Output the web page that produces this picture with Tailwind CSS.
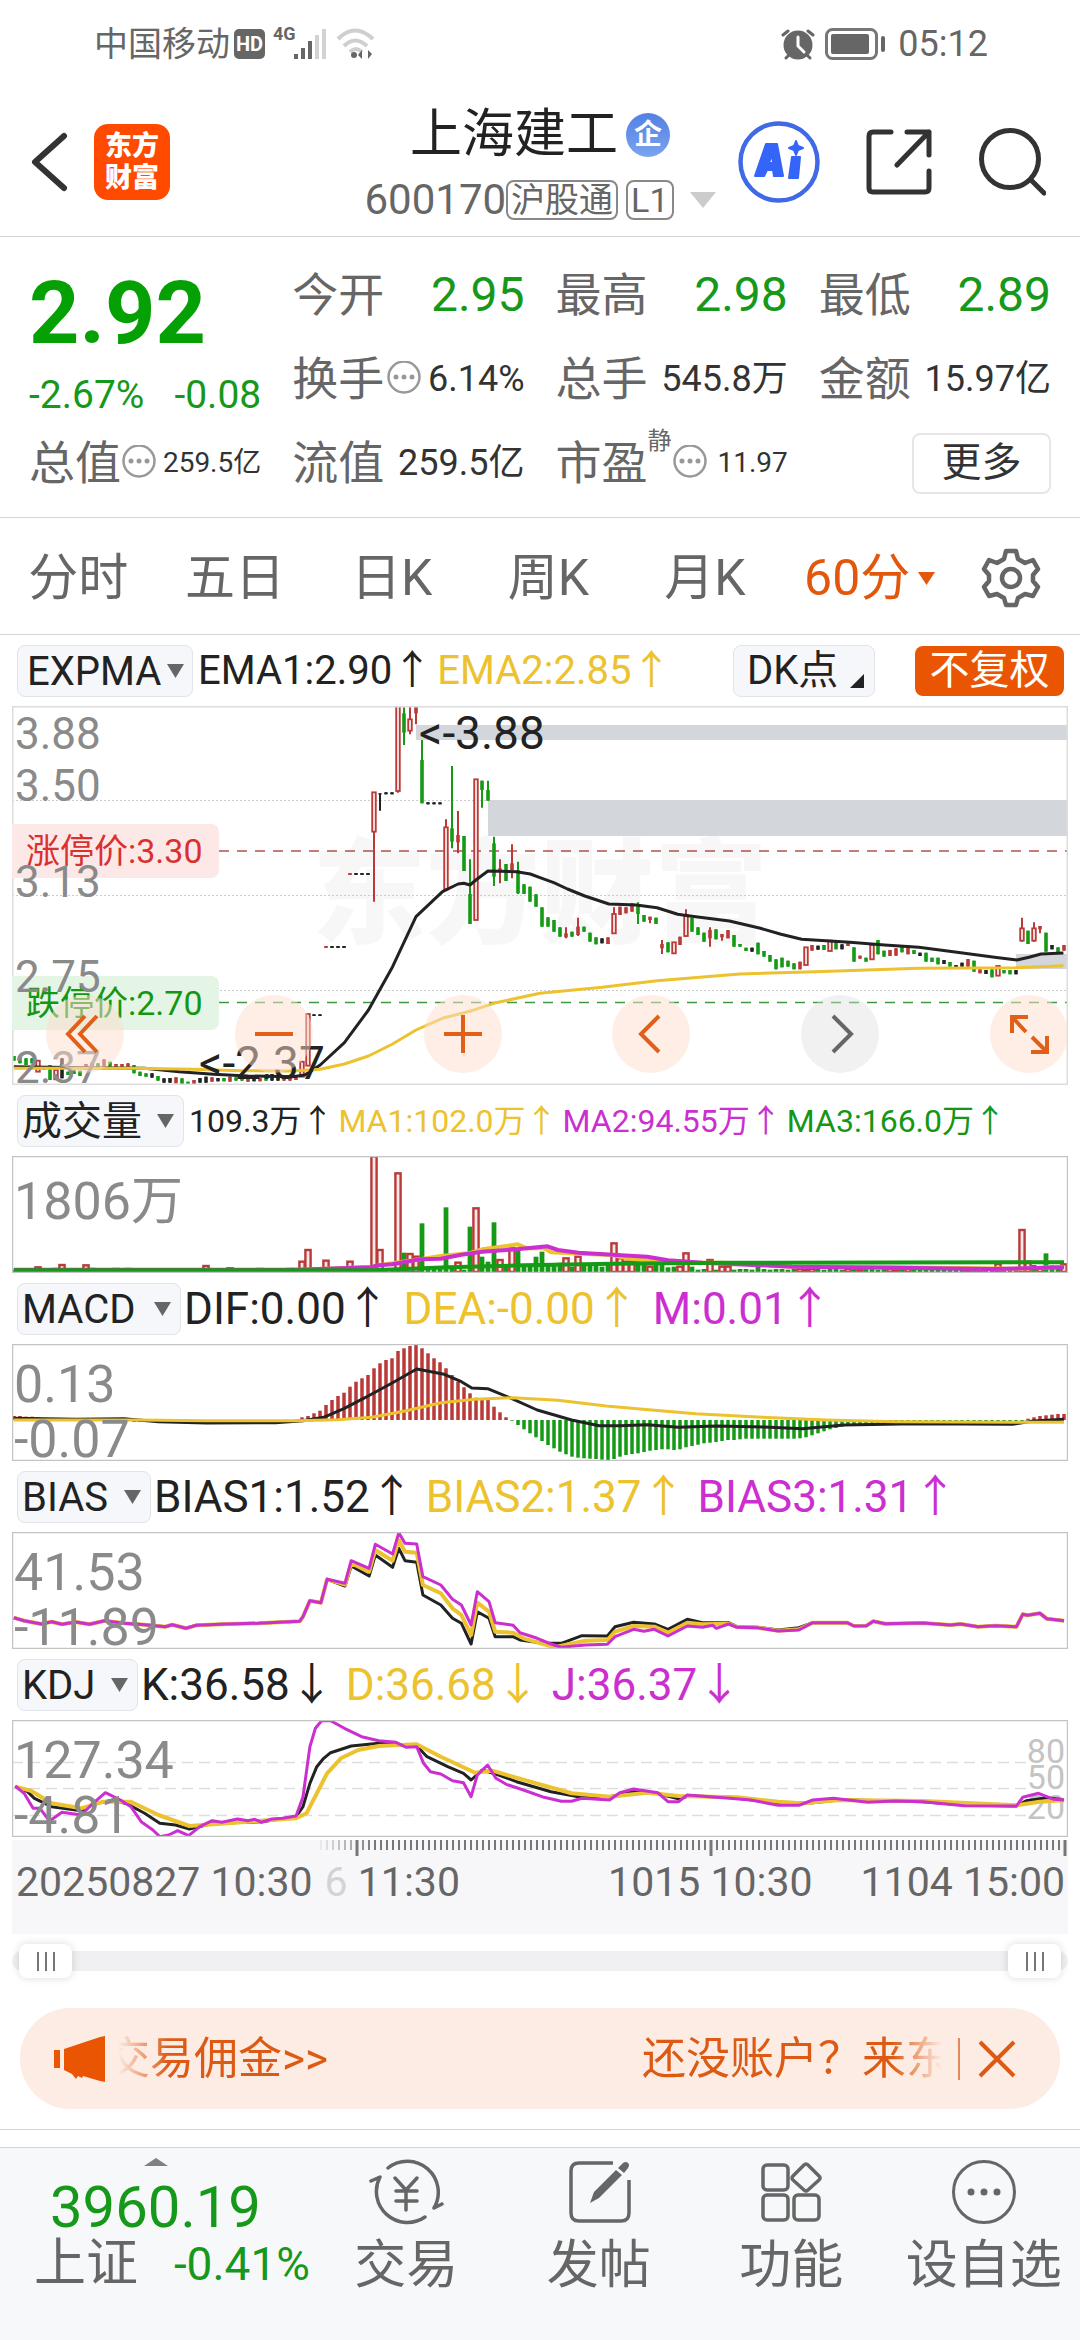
<!DOCTYPE html>
<html lang="zh-CN">
<head>
<meta charset="utf-8">
<meta name="viewport" content="width=device-width, initial-scale=1">
<title>上海建工 600170</title>
<script src="https://cdn.jsdelivr.net/npm/@tailwindcss/browser@4"></script>
</head>
<body class="bg-white text-[#666] font-[Roboto,'Noto_Sans_CJK_SC',sans-serif]">
<div class="flex min-h-screen flex-col">

  <!-- status bar -->
  <div class="flex h-[88px] items-center justify-between pr-[92px] pl-[94px]">
    <div class="flex items-center">
      <span class="text-[34px] leading-10">中国移动</span>
      <span class="ml-1 flex h-[30px] w-[31px] items-center justify-center rounded-[5px] bg-[#666] text-[20px] font-bold leading-none text-white">HD</span>
      <span class="ml-2 self-start text-[18px] font-bold leading-5">4G</span>
      <svg class="-ml-1 h-8 w-9" viewBox="0 0 36 32" fill="#666"><rect x="2" y="26" width="4" height="5"/><rect x="9" y="20" width="4" height="11"/><rect x="16" y="13" width="4" height="18"/><g fill="#d2d2d2"><rect x="23" y="7" width="4" height="24"/><rect x="30" y="1" width="4" height="30"/></g></svg>
      <svg class="ml-2 h-8 w-10" viewBox="0 0 40 32" fill="none" stroke="#cfcfcf" stroke-width="4"><path d="M2 11q17-17 35 0M8 18q11-11 23 0M14 24q6-6 12 0"/><circle cx="18" cy="27" r="3" fill="#666" stroke="none"/><path d="M26 31v-9l-4 5zM32 22v9l4-5z" fill="#666" stroke="none"/></svg>
    </div>
    <div class="flex items-center">
      <svg class="h-8 w-9" viewBox="0 0 36 32"><circle cx="17" cy="17" r="14.500" fill="#666"/><path d="M2 7l5-4M32 7l-5-4M5 30l3-3M29 30l-3-3" stroke="#666" stroke-width="3" stroke-linecap="round"/><path d="M17 9v9l6 6" fill="none" stroke="#fff" stroke-width="3" stroke-linecap="round"/></svg>
      <svg class="ml-2 h-8 w-[61px]" viewBox="0 0 61 32" fill="#666"><rect x="1.500" y="1.500" width="50" height="29" rx="6" fill="none" stroke="#777" stroke-width="3"/><rect x="6" y="6" width="38" height="20" rx="2"/><rect x="56" y="8" width="4" height="16" rx="2"/></svg>
      <span class="ml-3 text-[36px] leading-10">05:12</span>
    </div>
  </div>

  <!-- title bar -->
  <header class="grid h-[149px] grid-cols-[1fr_auto_1fr] items-center border-b border-[#d5d5d5] px-[30px]">
    <div class="flex items-center gap-6">
      <button aria-label="返回"><svg class="h-16 w-10" viewBox="0 0 40 64" fill="none" stroke="#333" stroke-width="6" stroke-linecap="round" stroke-linejoin="round"><path d="M34 6L5 32l29 26"/></svg></button>
      <a href="#" class="flex h-[76px] w-[76px] flex-col items-center justify-center rounded-[14px] bg-[#ff4a00] text-[27px] font-black leading-[32px] text-white"><span>东方</span><span>财富</span></a>
    </div>
    <div class="flex flex-col items-center pt-2">
      <h1 class="flex items-center gap-2 text-[52px] leading-[68px] text-[#222]">上海建工<span class="flex h-11 w-11 items-center justify-center rounded-full bg-gradient-to-b from-[#5480e4] to-[#7aa3ee] text-[28px] font-bold leading-none text-white">企</span></h1>
      <div class="flex items-center text-[42px] leading-[62px]">600170<span class="flex h-10 items-center rounded-lg border-2 border-[#888] px-[3px] text-[34px] leading-none">沪股通</span><span class="ml-2 flex h-10 items-center rounded-lg border-2 border-[#888] px-[3px] text-[34px] leading-none">L1</span>
        <svg class="ml-4 h-4 w-[26px]" viewBox="0 0 26 16"><path d="M0 0h26L13 16z" fill="#ccc"/></svg></div>
    </div>
    <div class="flex items-center justify-end gap-[46px] pr-1">
      <button aria-label="Ai"><svg class="h-[82px] w-[82px]" viewBox="0 0 82 82"><circle cx="41" cy="41" r="38.500" fill="none" stroke="#4169e6" stroke-width="4.500"/><path fill="#3565f8" stroke="#3565f8" stroke-width="2" stroke-linejoin="round" fill-rule="evenodd" d="M17 55L28 23h11l6 32h-9l-1-6h-6l-3 6zM31 42h4l-1-9zM54 36h8l-2 21h-9zM58 20l2 5 5 2-5 2-2 5-2-5-5-2 5-2z"/></svg></button>
      <button aria-label="分享"><svg class="h-[66px] w-[66px]" viewBox="0 0 66 66" fill="none" stroke="#333" stroke-width="5" stroke-linecap="round" stroke-linejoin="round"><path d="M25 3H7q-4 0-4 4v52q0 4 4 4h52q4 0 4-4V42M41 3h22v23M63 3L31 36"/></svg></button>
      <button aria-label="搜索"><svg class="h-[68px] w-[68px]" viewBox="0 0 68 68" fill="none" stroke="#333" stroke-width="5" stroke-linecap="round"><circle cx="32" cy="31" r="28.500"/><path d="M53 52l13 13"/></svg></button>
    </div>
  </header>

  <!-- quote -->
  <section class="grid h-[281px] grid-cols-4 grid-rows-[84px_84px_84px] content-start gap-x-[31px] border-b border-[#d5d5d5] px-[29px] pt-4">
    <div class="row-span-2 flex flex-col">
      <div class="pt-2 text-[88px] font-bold leading-[104px] text-[#04a004]">2.92</div>
      <div class="flex justify-between text-[39px] leading-[60px] text-[#16981a]"><span>-2.67%</span><span>-0.08</span></div>
    </div>
    <div class="flex items-center justify-between"><span class="text-[46px]">今开</span><span class="text-[48px] text-[#16981a]">2.95</span></div>
    <div class="flex items-center justify-between"><span class="text-[46px]">最高</span><span class="text-[48px] text-[#16981a]">2.98</span></div>
    <div class="flex items-center justify-between"><span class="text-[46px]">最低</span><span class="text-[48px] text-[#16981a]">2.89</span></div>
    <div class="flex items-center justify-between"><span class="flex items-center text-[46px]">换手<svg class="ml-[2px] h-9 w-9" viewBox="0 0 36 36"><circle cx="18" cy="16" r="15.500" fill="none" stroke="#999" stroke-width="2.500"/><g fill="#999"><circle cx="10" cy="16" r="2.500"/><circle cx="18" cy="16" r="2.500"/><circle cx="26" cy="16" r="2.500"/></g></svg></span><span class="text-[36px] text-[#333]">6.14%</span></div>
    <div class="flex items-center justify-between"><span class="text-[46px]">总手</span><span class="text-[36px] text-[#333]">545.8万</span></div>
    <div class="flex items-center justify-between"><span class="text-[46px]">金额</span><span class="text-[36px] text-[#333]">15.97亿</span></div>
    <div class="flex items-center justify-between whitespace-nowrap"><span class="flex items-center text-[46px]">总值<svg class="h-9 w-9" viewBox="0 0 36 36"><circle cx="18" cy="16" r="15.500" fill="none" stroke="#999" stroke-width="2.500"/><g fill="#999"><circle cx="10" cy="16" r="2.500"/><circle cx="18" cy="16" r="2.500"/><circle cx="26" cy="16" r="2.500"/></g></svg></span><span class="text-[28px] text-[#333]">259.5亿</span></div>
    <div class="flex items-center justify-between"><span class="text-[46px]">流值</span><span class="text-[36px] text-[#333]">259.5亿</span></div>
    <div class="flex items-center justify-between"><span class="flex items-center text-[46px]">市盈<span class="mb-11 text-[24px] leading-6">静</span><svg class="h-9 w-9" viewBox="0 0 36 36"><circle cx="18" cy="16" r="15.500" fill="none" stroke="#999" stroke-width="2.500"/><g fill="#999"><circle cx="10" cy="16" r="2.500"/><circle cx="18" cy="16" r="2.500"/><circle cx="26" cy="16" r="2.500"/></g></svg></span><span class="text-[28px] text-[#333]">11.97</span></div>
    <div class="flex items-center justify-end"><button class="h-[61px] w-[139px] rounded-lg border-2 border-[#e6e6e6] text-[40px] leading-none text-[#333]">更多</button></div>
  </section>

  <!-- period tabs -->
  <nav class="flex h-[117px] items-center border-b border-[#d5d5d5] pt-1 text-[50px] leading-none">
    <button class="flex-1">分时</button>
    <button class="flex-1">五日</button>
    <button class="flex-1">日K</button>
    <button class="flex-1">周K</button>
    <button class="flex-1">月K</button>
    <button class="flex flex-1 items-center justify-center gap-2 pl-2 text-[#e2570c]">60分<svg class="h-[13px] w-[17px]" viewBox="0 0 17 13"><path d="M0 0h17L8.500 13z" fill="#e2570c"/></svg></button>
    <button aria-label="设置" class="flex w-[132px] pl-[33px]"><svg class="h-[60px] w-[60px]" viewBox="0 0 60 60" fill="none" stroke="#666" stroke-width="4.500" stroke-linejoin="round"><path d="M25 3h10l2 8 7 4 8-3 5 9-5 6v6l5 6-5 9-8-2-7 4-2 7H25l-2-7-7-4-8 2-5-9 5-6v-6l-5-6 5-9 8 3 7-4z"/><circle cx="30" cy="30" r="9"/></svg></button>
  </nav>

  <main class="px-3">
    <!-- EXPMA -->
    <div class="flex h-[71px] items-center gap-[5px] pr-1 pl-[5px] text-[40px] leading-[52px] text-[#222]">
      <div class="relative">
        <select aria-label="主图指标" class="block h-[52px] w-[176px] appearance-none rounded-lg border border-[#e1e4e8] bg-[#f5f7fa] pl-[9px]"><option>EXPMA</option></select>
        <svg class="pointer-events-none absolute top-[19px] right-[9px] h-[14px] w-[17px]" viewBox="0 0 17 14"><path d="M0 0h17L8.500 14z" fill="#666"/></svg>
      </div>
      <span class="whitespace-nowrap">EMA1:2.90↑</span>
      <span class="whitespace-nowrap text-[#ecc22e]">EMA2:2.85↑</span>
      <button class="ml-auto flex h-[52px] w-[142px] items-center rounded-lg border border-[#e1e4e8] bg-[#f5f7fa] pl-[13px]">DK点<svg class="mt-5 ml-3 h-[14px] w-[14px]" viewBox="0 0 14 14"><path d="M14 0v14H0z" fill="#222"/></svg></button>
      <button class="ml-[35px] h-[50px] w-[149px] rounded-lg bg-[#ea5504] text-[40px] leading-none text-white">不复权</button>
    </div>
    <div class="relative h-[379px] text-[44px] leading-none text-[#8a8a8a]">
      <div aria-hidden="true" class="absolute inset-x-0 top-[132px] flex justify-center text-[114px] font-black text-[#f7f7f7]">东方财富</div>
      <svg id="price" class="absolute inset-0 h-full w-full" viewBox="12 706 1056 379" preserveAspectRatio="none"></svg>
      <span class="absolute top-[118px] left-0 flex h-[54px] w-[207px] items-center rounded-r-lg bg-[#fde8e8] pl-[14px] text-[34px] text-[#d93030]">涨停价:3.30</span>
      <span class="absolute top-[270px] left-0 flex h-[54px] w-[207px] items-center rounded-r-lg bg-[#e4f4e5] pl-[14px] text-[34px] text-[#149614]">跌停价:2.70</span>
      <span class="absolute top-[6px] left-[3px]">3.88</span>
      <span class="absolute top-[58px] left-[3px]">3.50</span>
      <span class="absolute top-[154px] left-[3px]">3.13</span>
      <span class="absolute top-[249px] left-[3px]">2.75</span>
      <span class="absolute top-[340px] left-[3px]">2.37</span>
      <span class="absolute top-[4px] left-[407px] text-[46px] text-[#222]">&lt;-3.88</span>
      <span class="absolute top-[334px] left-[187px] text-[46px] text-[#222]">&lt;-2.37</span>
      <div class="absolute right-0 bottom-3 left-[34px] flex justify-between">
        <button aria-label="最早" class="h-[78px] w-[78px] rounded-full bg-[#fdddcb]/50"><svg class="h-full w-full" viewBox="0 0 78 78" fill="none" stroke="#e0601a" stroke-width="4"><path d="M39 21L22 39l17 18M51 21L34 39l17 18"/></svg></button>
        <button aria-label="缩小" class="h-[78px] w-[78px] rounded-full bg-[#fdddcb]/50"><svg class="h-full w-full" viewBox="0 0 78 78" fill="none" stroke="#e0601a" stroke-width="4"><path d="M20 39h38"/></svg></button>
        <button aria-label="放大" class="h-[78px] w-[78px] rounded-full bg-[#fdddcb]/50"><svg class="h-full w-full" viewBox="0 0 78 78" fill="none" stroke="#e0601a" stroke-width="4"><path d="M20 39h38M39 20v38"/></svg></button>
        <button aria-label="左移" class="h-[78px] w-[78px] rounded-full bg-[#fdddcb]/50"><svg class="h-full w-full" viewBox="0 0 78 78" fill="none" stroke="#e0601a" stroke-width="4"><path d="M47 21L29 39l18 18"/></svg></button>
        <button aria-label="右移" class="h-[78px] w-[78px] rounded-full bg-[#dddddd]/40"><svg class="h-full w-full" viewBox="0 0 78 78" fill="none" stroke="#666" stroke-width="4"><path d="M32 21l18 18-18 18"/></svg></button>
        <button aria-label="全屏" class="h-[78px] w-[78px] rounded-full bg-[#fdddcb]/50"><svg class="h-full w-full" viewBox="0 0 78 78" fill="none" stroke="#e0601a" stroke-width="4"><path d="M38 22H22v16M23 23l13 14M41 57h16V41M56 56L42 42"/></svg></button>
      </div>
    </div>

    <!-- volume -->
    <div class="flex h-[71px] items-center gap-[5px] pl-[5px] text-[32px] leading-[52px] whitespace-nowrap text-[#222]">
      <div class="relative text-[40px]">
        <select aria-label="成交量" class="block h-[52px] w-[167px] appearance-none rounded-lg border border-[#e1e4e8] bg-[#f5f7fa] pl-[4px]"><option>成交量</option></select>
        <svg class="pointer-events-none absolute top-[19px] right-[10px] h-[14px] w-[17px]" viewBox="0 0 17 14"><path d="M0 0h17L8.500 14z" fill="#666"/></svg>
      </div>
      <span>109.3万↑</span>
      <span class="text-[#ecc22e]">MA1:102.0万↑</span>
      <span class="text-[#cb2fd0]">MA2:94.55万↑</span>
      <span class="text-[#159615]">MA3:166.0万↑</span>
    </div>
    <div class="relative h-[117px] text-[52px] leading-none text-[#8a8a8a]">
      <svg id="volume" class="absolute inset-0 h-full w-full" viewBox="12 1156 1056 117" preserveAspectRatio="none"></svg>
      <span class="absolute top-[20px] left-[2px]">1806万</span>
    </div>

    <!-- MACD -->
    <div class="flex h-[71px] items-center gap-[14px] pl-[5px] text-[44px] leading-[52px] whitespace-nowrap text-[#222]">
      <div class="relative mr-[-11px] text-[40px]">
        <select aria-label="MACD" class="block h-[52px] w-[164px] appearance-none rounded-lg border border-[#e1e4e8] bg-[#f5f7fa] pl-[4px]"><option>MACD</option></select>
        <svg class="pointer-events-none absolute top-[19px] right-[10px] h-[14px] w-[17px]" viewBox="0 0 17 14"><path d="M0 0h17L8.500 14z" fill="#666"/></svg>
      </div>
      <span>DIF:0.00↑</span>
      <span class="text-[#ecc22e]">DEA:-0.00↑</span>
      <span class="text-[#cb2fd0]">M:0.01↑</span>
    </div>
    <div class="relative h-[117px] text-[52px] leading-none text-[#8a8a8a]">
      <svg id="macd" class="absolute inset-0 h-full w-full" viewBox="12 1344 1056 117" preserveAspectRatio="none"></svg>
      <span class="absolute top-[15px] left-[2px]">0.13</span>
      <span class="absolute top-[70px] left-[2px]">-0.07</span>
    </div>

    <!-- BIAS -->
    <div class="flex h-[71px] items-center gap-3 pl-[5px] text-[44px] leading-[52px] whitespace-nowrap text-[#222]">
      <div class="relative mr-[-9px] text-[40px]">
        <select aria-label="BIAS" class="block h-[52px] w-[134px] appearance-none rounded-lg border border-[#e1e4e8] bg-[#f5f7fa] pl-[4px]"><option>BIAS</option></select>
        <svg class="pointer-events-none absolute top-[19px] right-[10px] h-[14px] w-[17px]" viewBox="0 0 17 14"><path d="M0 0h17L8.500 14z" fill="#666"/></svg>
      </div>
      <span>BIAS1:1.52↑</span>
      <span class="text-[#ecc22e]">BIAS2:1.37↑</span>
      <span class="text-[#cb2fd0]">BIAS3:1.31↑</span>
    </div>
    <div class="relative h-[117px] text-[52px] leading-none text-[#8a8a8a]">
      <svg id="bias" class="absolute inset-0 h-full w-full" viewBox="12 1532 1056 117" preserveAspectRatio="none"></svg>
      <span class="absolute top-[15px] left-[2px]">41.53</span>
      <span class="absolute top-[70px] left-[2px]">-11.89</span>
    </div>

    <!-- KDJ -->
    <div class="flex h-[71px] items-center gap-3 pl-[5px] text-[44px] leading-[52px] whitespace-nowrap text-[#222]">
      <div class="relative mr-[-9px] text-[40px]">
        <select aria-label="KDJ" class="block h-[52px] w-[121px] appearance-none rounded-lg border border-[#e1e4e8] bg-[#f5f7fa] pl-[4px]"><option>KDJ</option></select>
        <svg class="pointer-events-none absolute top-[19px] right-[10px] h-[14px] w-[17px]" viewBox="0 0 17 14"><path d="M0 0h17L8.500 14z" fill="#666"/></svg>
      </div>
      <span>K:36.58↓</span>
      <span class="text-[#ecc22e]">D:36.68↓</span>
      <span class="text-[#cb2fd0]">J:36.37↓</span>
    </div>
    <div class="relative h-[117px] text-[52px] leading-none text-[#8a8a8a]">
      <span class="absolute top-[14px] right-[3px] text-[34px] text-[#c4c4c4]">80</span>
      <span class="absolute top-[40px] right-[3px] text-[34px] text-[#c4c4c4]">50</span>
      <span class="absolute top-[70px] right-[3px] text-[34px] text-[#c4c4c4]">20</span>
      <svg id="kdj" class="absolute inset-0 h-full w-full" viewBox="12 1720 1056 117" preserveAspectRatio="none"></svg>
      <span class="absolute top-[15px] left-[2px]">127.34</span>
      <span class="absolute top-[70px] left-[2px]">-4.81</span>
    </div>

    <!-- time axis -->
    <div class="mt-[3px] h-[94px] bg-[#f7f7fa] text-[41px] text-[#666]">
      <svg id="ticks" class="block h-4 w-full" viewBox="12 1840 1056 16" preserveAspectRatio="none"></svg>
      <div class="flex pr-[3px] pl-1 leading-[52px] whitespace-nowrap">
        <span>20250827 10:30</span>
        <span class="ml-3"><span class="text-[#d3d3d5]">6</span> 11:30</span>
        <span class="ml-auto">1015 10:30</span>
        <span class="ml-12">1104 15:00</span>
      </div>
    </div>

    <!-- range -->
    <div class="relative mt-[17px] h-5 rounded-full bg-[#f0f0f3]">
      <input type="range" aria-label="起点" min="0" max="100" value="0" class="pointer-events-none absolute -top-2 right-[7px] left-[7px] h-9 appearance-none bg-transparent [&::-webkit-slider-thumb]:pointer-events-auto [&::-webkit-slider-thumb]:h-[34px] [&::-webkit-slider-thumb]:w-[53px] [&::-webkit-slider-thumb]:appearance-none [&::-webkit-slider-thumb]:rounded-lg [&::-webkit-slider-thumb]:shadow-[0_0_8px_rgba(0,0,0,0.15)] [&::-webkit-slider-thumb]:[background:repeating-linear-gradient(90deg,#777_0_2px,#fff_2px_8px)_center/18px_19px_no-repeat_white]">
      <input type="range" aria-label="终点" min="0" max="100" value="100" class="pointer-events-none absolute -top-2 right-[7px] left-[7px] h-9 appearance-none bg-transparent [&::-webkit-slider-thumb]:pointer-events-auto [&::-webkit-slider-thumb]:h-[34px] [&::-webkit-slider-thumb]:w-[53px] [&::-webkit-slider-thumb]:appearance-none [&::-webkit-slider-thumb]:rounded-lg [&::-webkit-slider-thumb]:shadow-[0_0_8px_rgba(0,0,0,0.15)] [&::-webkit-slider-thumb]:[background:repeating-linear-gradient(90deg,#777_0_2px,#fff_2px_8px)_center/18px_19px_no-repeat_white]">
    </div>

    <!-- notice -->
    <div class="mx-2 mt-[37px] flex h-[101px] items-center rounded-full bg-[#fcece3] pr-11 pl-[34px] text-[44px] leading-none text-[#dc5a14]">
      <svg class="h-[46px] w-[52px] shrink-0" viewBox="0 0 52 46" fill="#ea5504"><path d="M0 14h6v18H0zM10 13L46 1l5-1v46l-5-1-17-5-1 2-4-2-2 3-4-5-8-4z"/></svg>
      <a href="#" class="ml-3 flex min-w-0 flex-1 justify-between overflow-hidden whitespace-nowrap leading-[60px] [mask-image:linear-gradient(90deg,transparent,#000_50px,#000_calc(100%-50px),transparent)]"><span class="-ml-3">交易佣金&gt;&gt;</span><span class="-mr-2">还没账户？来东</span></a>
      <span class="ml-4 h-[42px] w-[2px] bg-[#e08a5c]"></span>
      <button aria-label="关闭" class="ml-[18px]"><svg class="h-[38px] w-[38px]" viewBox="0 0 38 38" stroke="#dc5a14" stroke-width="4"><path d="M2 2l34 34M36 2L2 36"/></svg></button>
    </div>
  </main>

  <div class="mt-5 h-[19px] border-y border-[#d5d5d5]"></div>

  <!-- bottom bar -->
  <footer class="flex flex-1 bg-[#f7f8fa] text-[52px]">
    <a href="#" class="flex w-[310px] shrink-0 flex-col pt-[10px]">
      <svg class="ml-[144px] h-2 w-6" viewBox="0 0 24 8"><path d="M12 0l12 8H0z" fill="#808085"/></svg>
      <span class="mt-[10px] pl-[50px] text-[58px] leading-[62px] text-[#16981a]">3960.19</span>
      <span class="flex items-center justify-between pl-[34px] leading-[52px]">上证<span class="text-[46px] text-[#16981a]">-0.41%</span></span>
    </a>
    <nav class="grid flex-1 grid-cols-4 leading-[76px] whitespace-nowrap">
      <a href="#" class="flex flex-col items-center pt-2"><svg class="h-[72px] w-[76px]" viewBox="0 0 76 72" fill="none" stroke="#666" stroke-width="3.500" stroke-linecap="round" stroke-linejoin="round"><path d="M20 12A31 31 0 0 1 66 52l8-4M57 61A31 31 0 0 1 12 21l-9 4M27 22l11 12 11-12M38 34v20M28 35h21M28 45h21"/></svg>交易</a>
      <a href="#" class="flex flex-col items-center pt-2"><svg class="h-[72px] w-[72px]" viewBox="0 0 72 72" fill="none" stroke="#666" stroke-width="3.500"><path d="M50 7H16q-8 0-8 8v42q0 8 8 8h42q8 0 8-8V24"/><path d="M27 47l4-11 22-22 6 5-23 23zM55 12l5-5q3-2 5 0t0 5l-4 5z" fill="#666" stroke="none"/></svg>发帖</a>
      <a href="#" class="flex flex-col items-center pt-2"><svg class="h-[72px] w-[72px]" viewBox="0 0 72 72" fill="none" stroke="#666" stroke-width="3.500" stroke-linejoin="round"><rect x="8" y="9" width="25" height="25" rx="4"/><rect x="8" y="39" width="25" height="25" rx="4"/><rect x="39" y="39" width="25" height="25" rx="4"/><path d="M49 9q2-2 4 0l11 11q2 2 0 4L53 34q-2 2-4 0L38 24q-2-2 0-4z"/></svg>功能</a>
      <a href="#" class="flex flex-col items-center pt-2"><svg class="h-[72px] w-[72px]" viewBox="0 0 72 72"><circle cx="36" cy="36" r="30.500" fill="none" stroke="#666" stroke-width="3"/><g fill="#666"><circle cx="23" cy="36" r="3.500"/><circle cx="36" cy="36" r="3.500"/><circle cx="49" cy="36" r="3.500"/></g></svg>设自选</a>
    </nav>
  </footer>
</div>

<script>
const R='#b93a38',G='#159a15',K='#222',Y='#ecc22e',M='#cb2fd0';
const col={r:R,g:G,k:K};
const X=k=>14+6*k;
const put=(id,s)=>{document.getElementById(id).innerHTML=s};
// polyline from "x,y x,y"
const line=(pts,c,w=4)=>`<polyline points="${pts}" fill="none" stroke="${c}" stroke-width="${w}" stroke-linejoin="round"/>`;
const frame=(y,h)=>`<rect x="12.5" y="${y+.5}" width="1055" height="${h-1}" fill="none" stroke="#c4c4c4" stroke-width="1.5"/>`;
// scale chart units (third pixels vertically) to the panel
const conv=(sx,y0)=>s=>s.trim().split(/\s+/).map(p=>{const[a,b]=p.split(',');return (a/sx).toFixed(1)+','+(y0+b/3).toFixed(1)}).join(' ');

// candles: type, high, low, [body top, body bottom]
const C=`g1098,1112 g1102,1120 g1105,1125 g1105,1120 r1112,1145 g1128,1140 g1125,1170 r1140,1168 k1105,1165 g1145,1155 g1140,1152 g1142,1158 r1122,1140 r1118,1130 g1120,1132 r1108,1132 g1115,1130 r1122,1132 r1122,1132 r1120,1132 g1125,1150 g1145,1158 g1150,1160 k1150,1163 g1158,1172 k1165,1178 k1164,1178 r1162,1180 g1165,1188 g1175,1188 r1170,1187 k1164,1178 k1160,1178 r1162,1175 k1164,1174 g1164,1174 r1160,1175 g1162,1172 g1160,1172 r1160,1175 k1164,1174 r1164,1174 g1160,1172 k1152,1172 k1155,1172 r1158,1172 r1160,1172 r1156,1170 r1115,1160 r972,1127 k973,978 k973,978 r768,774 k768,774 k768,774 k768,774 r549,555 k549,555 k549,555 k549,555 r307,635,307,425 k310,362,310,313 k307,313 k307,313 r45,308,48,303 g52,165,70,128 r45,133,88,122 r40,103,45,70 g150,340,210,340 k337,343 k337,343 k337,343 r388,600,412,598 g228,475,415,455 r363,490,435,457 g438,543 g508,702,612,702 r268,690 g272,353,272,300 g272,332,300,332 g440,588,460,560 r508,580,535,545 g522,573 r463,565,520,540 g515,612,540,610 g583,612 g590,635 g613,650 g652,710 g682,710 g690,725 g712,740 r712,745,730,742 g725,740 r683,738,710,735 g710,725 g728,755 g742,763 k745,760 r742,762 r652,730,672,730 r650,675 r652,670 r640,665 g637,702,645,672 g675,695 r680,700,680,690 g683,702 r750,792,762,775 g757,787 r757,790 r740,765 r658,740,675,738 g683,725 g712,735 g728,755 r712,770,720,745 g718,748 r732,752,732,742 r720,745 g735,770 g762,770 g773,783 k773,785 g758,793 g783,800 g795,815 g808,838 g803,832 g812,830 g820,838 r815,838 r772,825 r765,782 k767,779 g765,780 r752,783 g755,778 k763,778 r758,768 g772,815 r797,806 g803,815 r765,808 g750,793 g782,800 r780,798 r775,797 g768,787 r770,793 g780,792 k788,798 g788,815 g803,816 g803,823 k810,822 g816,830 k825,833 k818,830 r807,830 g812,845 r838,850 k840,852 g838,862 r828,857 g840,850 g840,853 k840,853 r683,755,715,752 g722,762 r697,755,715,752 r708,730,708,718 g728,785 k765,778 g772,786 r765,782`.split(/\s+/).map(s=>[s[0],...s.slice(1).split(',').map(Number)]);
let p='';
for(const y of [800,895,990])p+=`<path d="M12 ${y}.5H1068" stroke="#ccc" stroke-dasharray="2 2"/>`;
p+='<path d="M416 725h652v15H416zM488 800h580v36H488zM1016 954h52v15h-52z" fill="#d3d6db"/>';
p+='<path d="M219 851H1068" stroke="#b5504e" stroke-width="1.5" stroke-dasharray="10 8"/><path d="M219 1002.500H1068" stroke="#3f9a44" stroke-width="1.5" stroke-dasharray="10 8"/>';
C.forEach(([t,h,l,a=h,b=l],k)=>{const x=X(k),y=v=>Math.max(706,690+v/3),c=col[t];
  p+=`<path d="M${x} ${y(h)}V${y(l)}" stroke="${c}" stroke-width="2"/>`;
  const H=y(b)-y(a);
  p+=t=='r'&&H>9?`<rect x="${x-1.8}" y="${y(a)}" width="3.600" height="${H}" fill="#fbe9e9" stroke="${c}" stroke-width="1.800"/>`:`<rect x="${x-1.8}" y="${y(a)}" width="3.600" height="${H}" fill="${c}"/>`;});
const a=conv(2.904,690),b5=s=>conv(2.904,690)(s).split(' ').map(q=>{const[x,y]=q.split(',');return(+x+540)+','+y}).join(' ');
p+=line(a('40,1130 250,1133 420,1135 520,1145 620,1153 720,1158 850,1160 885,1155 930,1125 1000,1058 1070,960 1140,830 1208,680 1285,605 1330,582 1347,580 1365,585 1382,570 1417,543 1500,545 1540,552')+' '+b5('0,563 40,578 80,597 130,618 200,642 280,645 340,653 400,673 430,677 550,693 640,715 700,733 760,748 900,757 1000,765 1100,772 1200,785 1320,802 1385,810 1420,802 1455,792 1520,789'),K,3);
p+=line(a('40,1135 380,1135 560,1138 700,1142 850,1143 930,1138 1000,1122 1070,1098 1140,1062 1208,1020 1285,985 1370,962 1440,938')+' '+b5('0,910 180,892 340,872 580,852 800,845 1100,835 1380,833 1520,827'),Y,3);
p+='<rect x="12.500" y="706.500" width="1055" height="378" fill="none" stroke="#ddd" stroke-width="2"/>';
put('price',p);

// volume
const V={4:562,8:555,12:556,20:566,25:565,32:558,36:565,48:545,49:510,52:542,56:545,60:229,61:510,64:280,65:518,66:522,67:530,68:430,72:382,74:548,76:440,77:385,78:530,79:545,80:427,81:540,82:560,83:505,84:510,85:555,86:555,87:530,88:515,89:550,90:558,91:548,92:535,93:560,94:530,95:555,96:550,97:552,98:560,99:555,100:490,101:535,102:545,103:545,104:540,105:555,106:560,107:555,108:552,109:562,110:560,111:560,112:520,113:560,116:540,118:560,119:560,124:560,136:562,143:562,164:552,168:450,169:545,170:555,171:562,172:520,173:555,174:560,175:553};
let v=`<g>`;
for(let k=0;k<176;k++){const t=V[k]??(k%3?567:569),y=1080+t/3,rd=[4,8,12,32,36,48,49,52,56,60,61,64,66,67,74,77,81,83,92,94,100,101,102,103,106,111,112,116,118,119,164,168,169,171,175].includes(k)||(!(k in V)&&C[k][0]=='r');
  v+=rd?`<rect x="${X(k)-2.6}" y="${y}" width="5.200" height="${1272-y}" fill="#fbe9e9" stroke="${R}" stroke-width="2.400"/>`:`<rect x="${X(k)-2.4}" y="${y}" width="4.800" height="${1272-y}" fill="#159a15"/>`;}
v+='</g>';
const z=conv(1.452,1080);
v+=line(z('20,570 430,570 540,560 560,553 610,538 640,528 680,520 700,508 752,493 765,505 790,505 800,517 850,522 890,525 910,535 970,548 1050,548 1150,560 1300,562 1480,566 1545,560'),Y)
 +line(z('20,569 430,569 538,562 550,556 570,553 610,538 640,536 670,524 700,515 750,508 795,499 810,510 840,518 890,524 940,530 970,541 1020,548 1150,560 1300,563 1440,567 1545,562'),M)
 +line(z('20,571 540,571 650,562 760,556 890,551 1050,548 1545,547'),G);
put('volume',v+frame(1156,117));

// MACD
const H=[258,258,260,260,262,264,266];for(let k=7;k<20;k++)H[k]=268;for(let k=20;k<48;k++)H[k]=276;
[262,258,250,242,225,210,198,188,170,155,145,135,115,100,90,85,63,55,48,43,55,70,85,97,115,135,155,172,190,203,205,210,230,247,262,272,285,298,310,322,333,345,355,365,373,380,383,385,386,387,389,392,387,380,375,372,370,366,362,360,358,358,360,358,352,348,344,340,338,336,333,330,330,328,326,326,326,326,326,326,326,326,326,325,322,316,310,304,298,294,290,288].forEach((q,i)=>H[48+i]=q);
for(let k=140;k<168;k++)H[k]=k<155?285-(k-140)/3:279;
[274,266,262,258,256,254,252,252].forEach((q,i)=>H[168+i]=q);
let m='';
H.forEach((q,k)=>{m+=`<path d="M${X(k)} 1420V${(1330+q/3).toFixed(1)}" stroke="${q<270?R:G}" stroke-width="3.500"/>`});
const w=conv(1.452,1330);
m+=line(w('20,265 110,268 180,266 230,275 300,279 400,278 440,272 470,262 500,235 530,203 570,158 605,117 645,133 670,155 685,174 708,176 740,203 780,240 830,270 870,287 900,287 940,284 985,292 1040,288 1110,291 1165,296 1225,285 1330,281 1470,283 1500,273 1545,268'),K,3)
 +line(w('20,270 200,270 300,272 430,272 490,269 540,262 590,242 640,218 690,208 745,203 810,211 880,228 950,241 1010,251 1100,261 1200,270 1300,275 1545,277'),Y,3);
put('macd',m+frame(1344,117));

// BIAS
const head='20,863 35,872 60,882 75,875 90,883 110,876 130,883 152,872 180,880 210,884 240,890 250,884 270,895 285,886 330,882 375,880 405,877 435,874 440,860 450,812 466,818 475,748 ';
const tail='1180,878 1230,878 1240,888 1258,887 1268,874 1285,881 1340,879 1380,885 1395,882 1420,890 1445,887 1476,890 1485,853 1492,856 1510,850 1520,866 1545,872';
put('bias',line(w(head+'501,768 510,708 536,738 545,675 570,712 579,655 588,692 605,697 614,795 640,825 657,865 670,880 684,942 693,845 710,865 719,920 745,920 755,930 790,940 815,940 845,917 882,918 893,890 920,877 950,882 970,898 998,868 1020,878 1058,878 1070,890 1100,892 1130,900 1160,893 '+tail),K,3)
 +line(w(head+'501,764 510,700 536,725 545,660 570,692 579,630 588,665 605,668 614,765 640,790 657,835 670,855 684,915 693,818 710,845 719,905 745,908 760,925 805,952 850,932 882,930 893,905 920,888 950,890 970,908 998,878 1020,883 1058,881 1070,891 1100,893 1130,902 1160,898 '+tail),Y)
 +line(w(head+'501,760 510,692 536,715 545,643 570,672 579,608 588,640 605,642 614,740 640,765 657,808 670,825 684,885 693,785 710,815 719,878 745,886 755,908 780,925 800,942 815,952 850,945 882,943 893,920 920,898 935,904 950,898 970,918 998,888 1020,892 1035,886 1040,895 1058,882 1070,892 1100,893 1130,903 1160,900 '+tail),M,3)
 +frame(1532,117));

// KDJ
const q=conv(1.452,1650);
put('kdj',[1762,1788,1815].map(y=>`<path d="M12 ${y}.5H1030" stroke="#ddd" stroke-width="1.500" stroke-dasharray="11 6"/>`).join('')
 +line(q('22,410 40,425 50,445 75,470 118,482 135,462 165,450 185,462 210,490 232,520 255,525 275,537 310,520 380,515 430,500 440,470 450,400 460,350 470,325 480,308 510,288 550,280 605,287 620,320 650,350 673,370 684,390 700,360 720,372 750,395 800,425 840,440 885,440 920,425 950,428 985,446 1000,438 1060,442 1130,460 1180,458 1220,449 1340,455 1400,465 1476,468 1490,452 1520,443 1545,449'),K,3)
 +line(q('22,410 45,422 75,460 118,475 150,455 190,455 230,495 275,528 330,520 430,505 445,490 460,430 475,370 495,325 520,300 550,288 605,283 640,320 690,368 715,362 770,395 830,430 885,440 940,428 985,438 1070,442 1130,455 1165,460 1220,450 1340,453 1476,466 1510,455 1545,451'),Y)
 +line(q('22,408 35,430 48,475 58,475 72,513 90,487 118,495 135,460 153,428 175,450 190,470 205,515 222,540 232,560 245,555 258,542 274,557 290,530 308,512 322,517 345,507 360,512 370,508 380,517 395,507 410,505 430,498 440,440 450,290 458,235 467,212 480,212 500,235 525,260 550,272 575,277 590,292 605,290 615,340 625,365 640,372 657,392 673,398 684,440 693,375 708,345 720,385 735,403 760,420 790,442 815,454 830,454 845,445 885,450 900,428 920,417 955,428 970,455 985,455 998,435 1050,443 1090,450 1130,466 1160,466 1180,450 1210,445 1260,457 1300,453 1340,455 1400,467 1440,468 1476,468 1485,442 1508,430 1530,448 1545,450'),M,3)
 +frame(1720,117));

let t='';
for(let x=321;x<1067;x+=6)t+=`<path d="M${x} 1840v10" stroke="#777" stroke-width="2" opacity="${Math.min(1,(x-315)/60)}"/>`;
for(const x of [357,711,1065])t+=`<path d="M${x} 1840v16" stroke="#777" stroke-width="3"/>`;
put('ticks',t);
</script>
</body>
</html>
